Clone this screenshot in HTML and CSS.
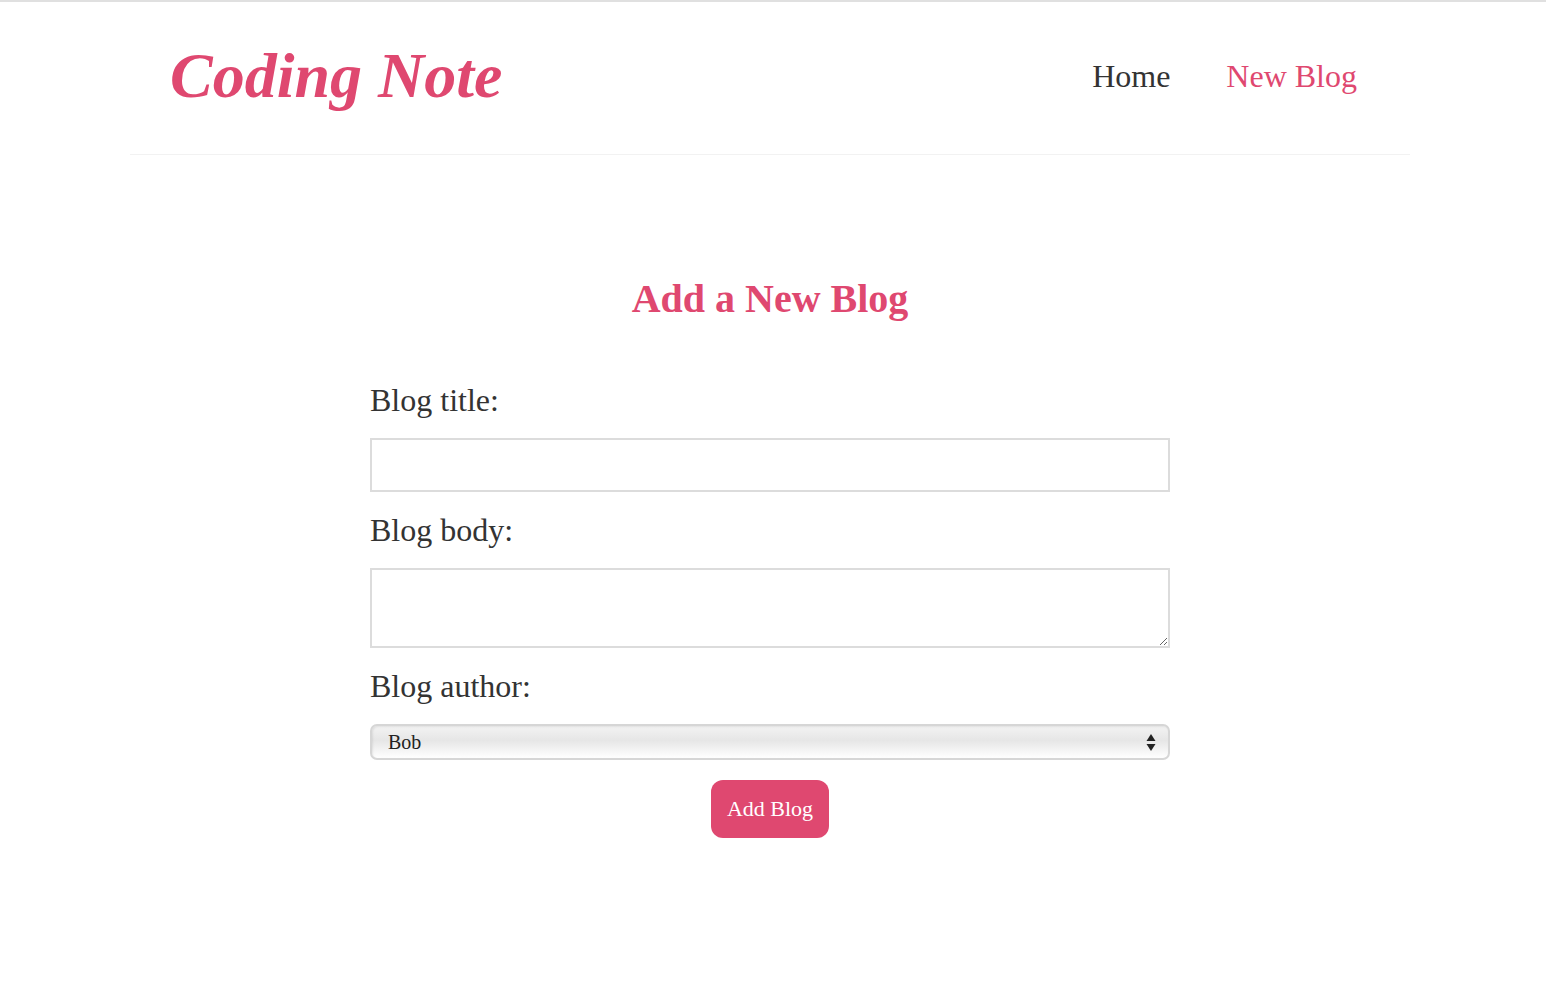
FILE: index.html
```html
<!DOCTYPE html>
<html lang="en">
<head>
<meta charset="utf-8">
<title>Coding Note</title>
<link rel="stylesheet" href="styles.css">
</head>
<body>
<nav class="navbar">
  <h1 class="brand">Coding Note</h1>
  <div class="links">
    <a href="#" class="link">Home</a>
    <a href="#" class="link link-active">New Blog</a>
  </div>
</nav>
<main class="create">
  <h2 class="create-title">Add a New Blog</h2>
  <form class="form">
    <label class="label">Blog title:</label>
    <input class="field field-input" type="text">
    <label class="label">Blog body:</label>
    <textarea class="field field-area"></textarea>
    <label class="label">Blog author:</label>
    <div class="select-wrap">
      <select class="field field-select">
        <option>Bob</option>
        <option>Alice</option>
      </select>
      <svg class="select-arrows" width="10" height="20" viewBox="0 0 10 20">
        <path d="M5 2 L9.5 9 L0.5 9 Z" fill="#222"/>
        <path d="M0.5 12 L9.5 12 L5 19 Z" fill="#222"/>
      </svg>
    </div>
    <div class="actions">
      <button type="button" class="btn">Add Blog</button>
    </div>
  </form>
</main>
</body>
</html>
```
FILE: styles.css
```css
* { box-sizing: border-box; }
html, body { margin: 0; padding: 0; background: #fff; }
body {
  border-top: 2px solid #e0e0e0;
  padding-right: 6px;
  font-family: "Liberation Serif", "Times New Roman", serif;
  color: #333;
}
.navbar {
  max-width: 1280px;
  margin: 0 auto;
  height: 153px;
  padding: 0 40px 4px;
  display: flex;
  align-items: center;
  border-bottom: 1px solid #f2f2f2;
}
.brand {
  margin: 0;
  font-size: 64px;
  font-style: italic;
  font-weight: bold;
  color: #df4870;
  line-height: 1.15;
}
.links {
  margin-left: auto;
  display: flex;
  gap: 30px;
}
.link {
  text-decoration: none;
  color: #333;
  font-size: 32px;
  padding: 0 13px;
}
.link-active { color: #df4870; }
.create {
  max-width: 800px;
  margin: 0 auto;
  text-align: center;
}
.create-title {
  margin: 121px 0 60px;
  font-size: 40px;
  font-weight: bold;
  color: #df4870;
  line-height: 46px;
}
.form { display: block; }
.label {
  display: block;
  text-align: left;
  font-size: 32px;
  line-height: 36px;
  color: #333;
}
.field {
  display: block;
  width: 100%;
  margin: 20px 0;
  border: 2px solid #dcdcdc;
  font-family: "Liberation Serif", serif;
  background: #fff;
}
.field-input { height: 54px; padding: 6px 10px; font-size: 20px; }
.field-area { height: 80px; padding: 6px 10px; font-size: 20px; }
.select-wrap { position: relative; margin: 20px 0; }
.field-select {
  margin: 0;
  height: 36px;
  appearance: none;
  -webkit-appearance: none;
  border: 2px solid #d6d6d6;
  border-radius: 7px;
  background: linear-gradient(#f3f3f3, #e6e6e6 45%, #ffffff);
  font-size: 20px;
  color: #222;
  padding: 0 16px;
  box-shadow: inset 1px 1px 2px rgba(0,0,0,0.08);
}
.select-arrows {
  position: absolute;
  right: 14px;
  top: 8px;
  pointer-events: none;
}
.actions { display: flex; justify-content: center; }
.btn {
  height: 58px;
  padding: 0 16px;
  border: 0;
  border-radius: 12px;
  background: #df4870;
  color: #fff;
  font-family: "Liberation Serif", serif;
  font-size: 22px;
  cursor: pointer;
}
```
